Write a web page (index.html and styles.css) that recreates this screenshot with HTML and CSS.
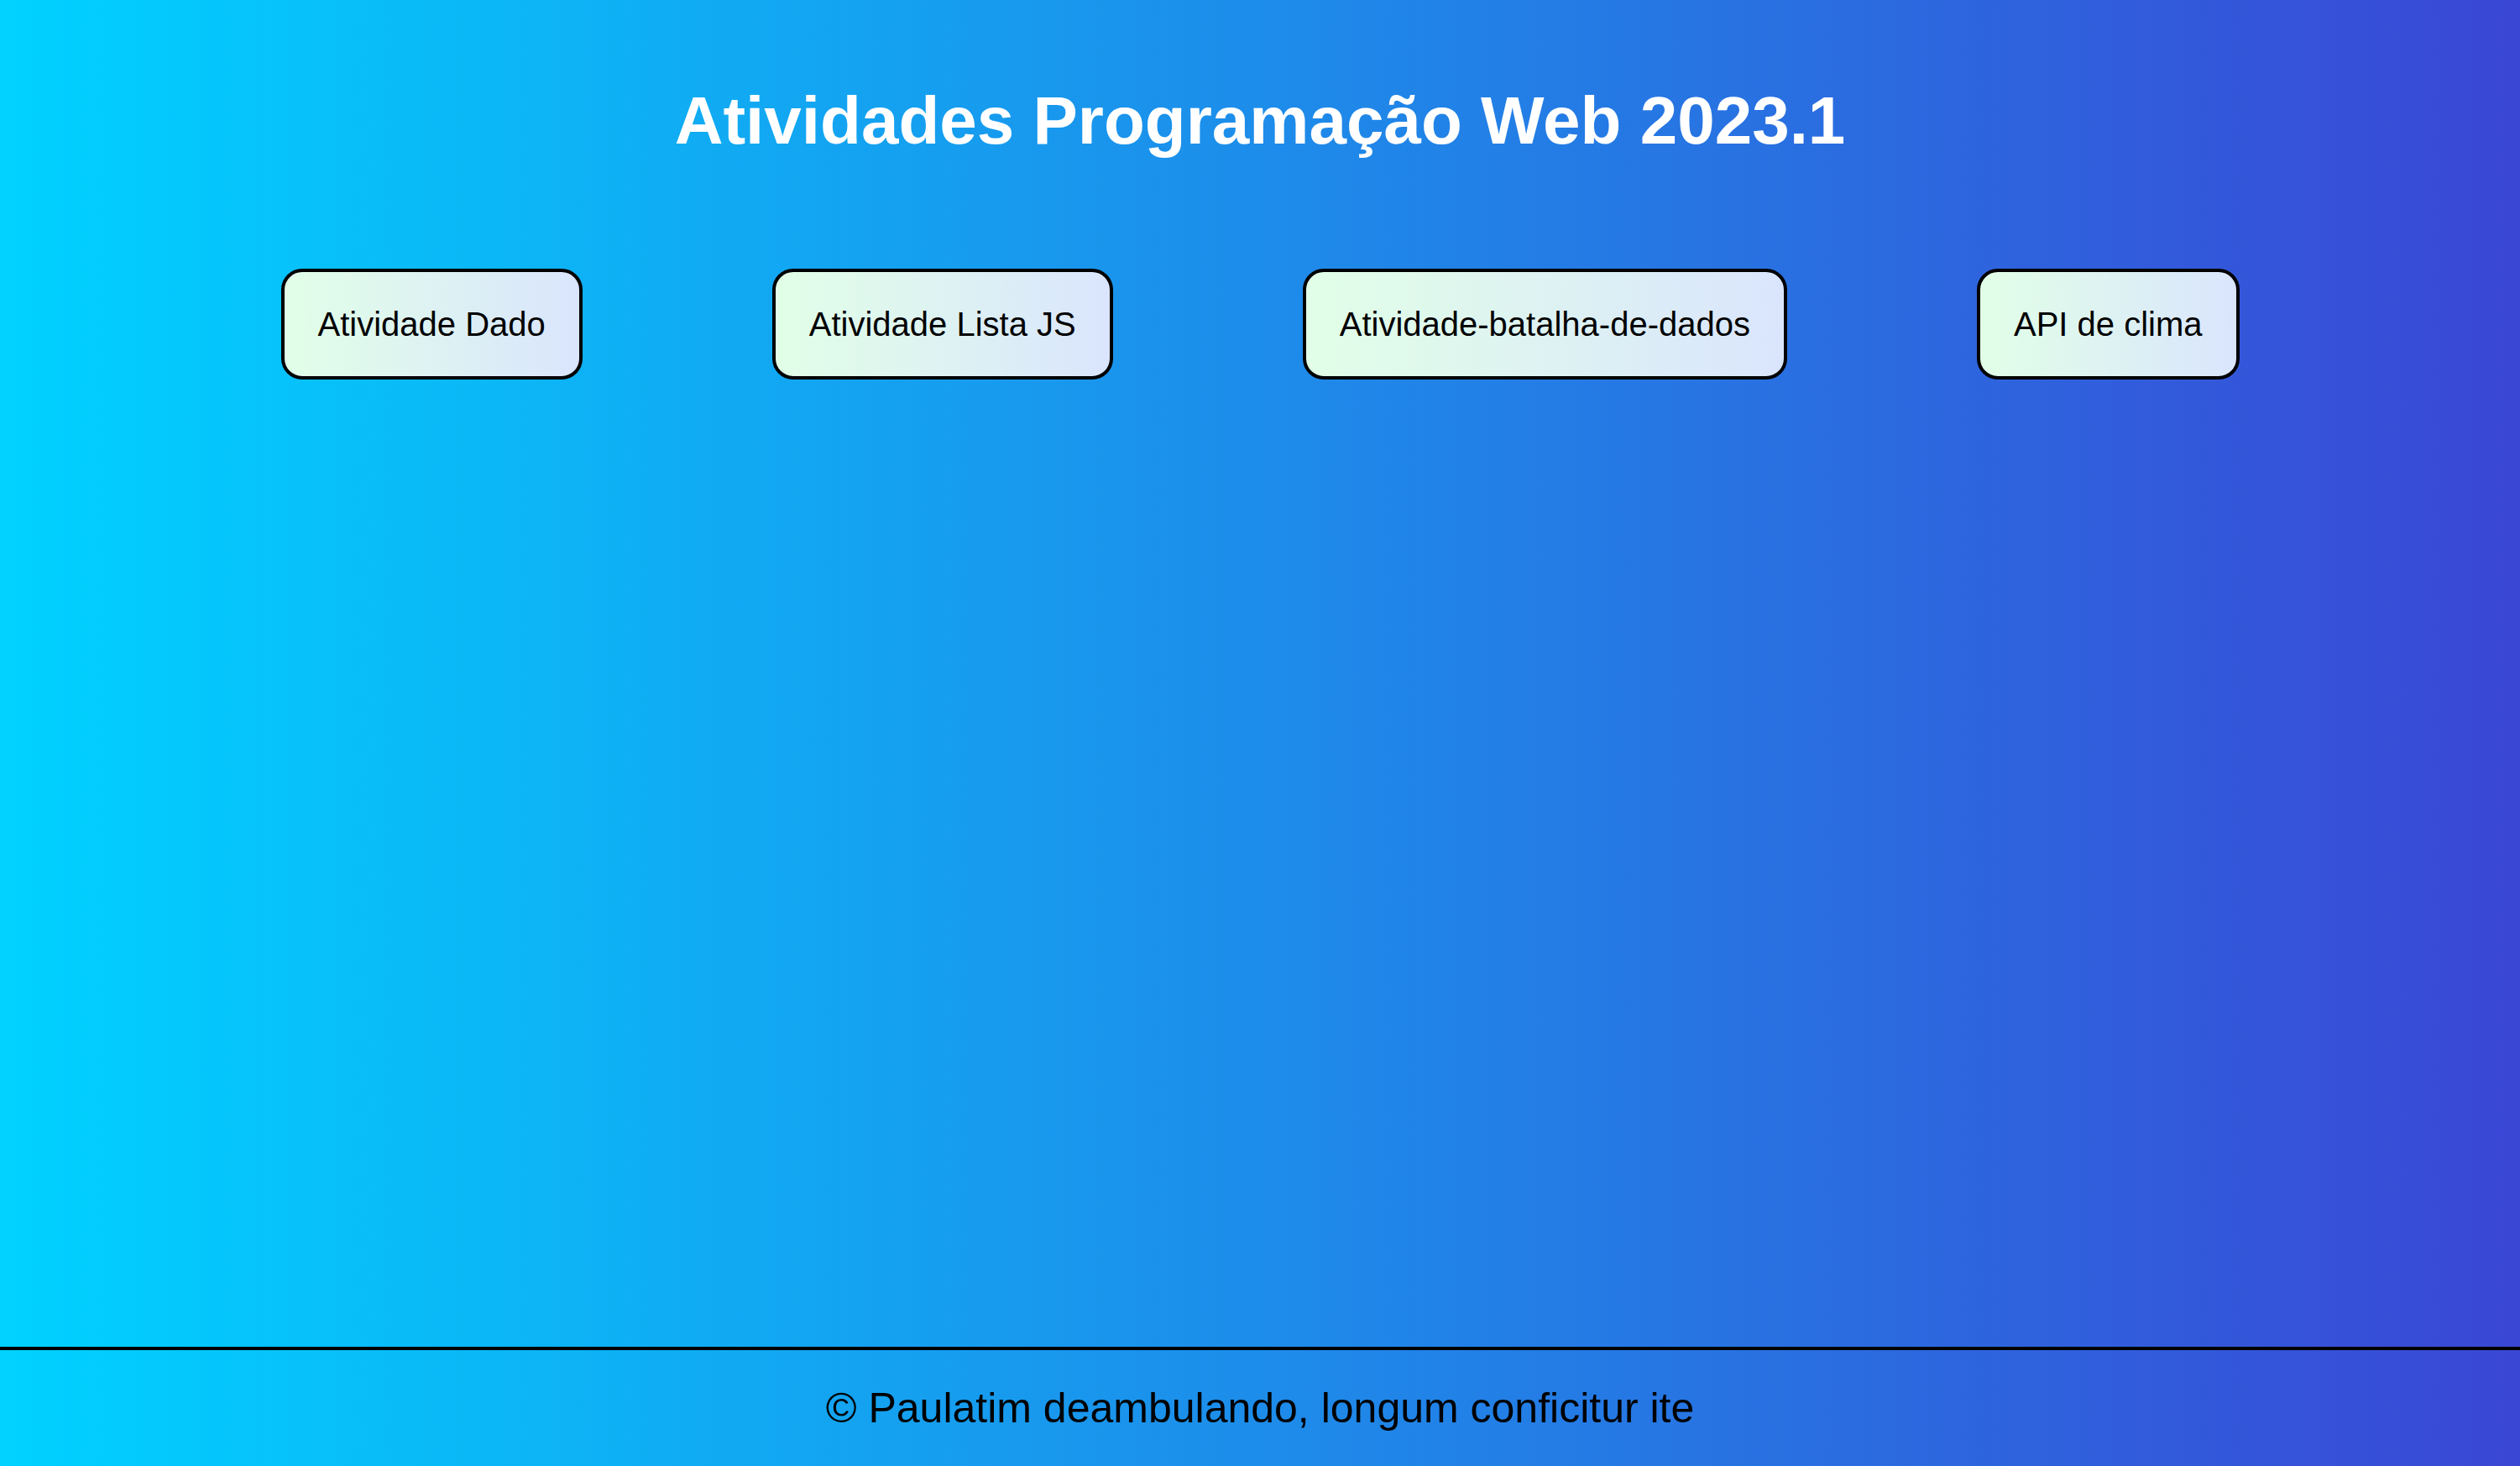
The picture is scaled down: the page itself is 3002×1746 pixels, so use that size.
FILE: index.html
```html
<!DOCTYPE html>
<html lang="pt-BR">
<head>
<meta charset="utf-8">
<title>Atividades Programação Web 2023.1</title>
<link rel="stylesheet" href="styles.css">
</head>
<body>
  <main class="main">
    <h1 class="title">Atividades Programação Web 2023.1</h1>
    <nav class="links">
      <a class="link-btn" href="#">Atividade Dado</a>
      <a class="link-btn" href="#">Atividade Lista JS</a>
      <a class="link-btn" href="#">Atividade-batalha-de-dados</a>
      <a class="link-btn" href="#">API de clima</a>
    </nav>
  </main>
  <footer class="footer">
    <p class="footer-text">© Paulatim deambulando, longum conficitur ite</p>
  </footer>
</body>
</html>
```

FILE: styles.css
```css
html, body {
  height: 100%;
}

body {
  margin: 0;
  min-height: 100vh;
  display: flex;
  flex-direction: column;
  background: linear-gradient(to right, #00d2ff, #3a47d5);
  font-family: "Liberation Sans", Arial, sans-serif;
  color: #000;
}

.main {
  flex: 1;
  display: flex;
  flex-direction: column;
}

.title {
  margin: 0;
  padding-top: 98px;
  font-size: 80px;
  font-weight: bold;
  color: #fff;
  text-align: center;
  line-height: 92px;
}

.links {
  display: flex;
  justify-content: center;
  align-items: flex-start;
  gap: 226px;
  margin-top: 130px;
}

.link-btn {
  display: block;
  padding: 39px 40px;
  border: 4px solid #000;
  border-radius: 25px;
  background: linear-gradient(to right, #e1ffe7, #dae5fd);
  color: #000;
  text-decoration: none;
  font-size: 40px;
  line-height: 46px;
  white-space: nowrap;
}

.footer {
  border-top: 4px solid #000;
  padding: 40px 0;
  text-align: center;
}

.footer-text {
  margin: 0;
  font-size: 50px;
  line-height: 58px;
}
```
